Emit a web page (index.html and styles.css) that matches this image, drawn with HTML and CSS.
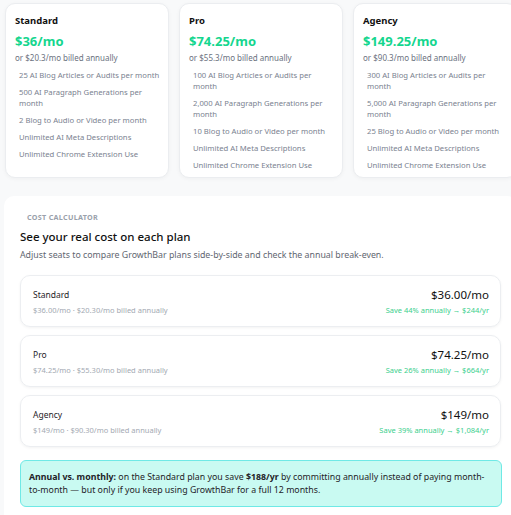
FILE: index.html
```html
<!DOCTYPE html>
<html lang="en">
<head>
    <meta charset="UTF-8">
    <meta name="viewport" content="width=device-width, initial-scale=1.0">
    <title>GrowthBar pricing</title>
    <link rel="stylesheet" href="styles.css">
</head>
<body>
    <div class="page">
        <div class="plans">
            <div class="plan">
                <h3>Standard</h3>
                <div class="price">$36/mo</div>
                <div class="annual">or $20.3/mo billed annually</div>
                <ul>
                    <li>25 AI Blog Articles or Audits per month</li>
                    <li>500 AI Paragraph Generations per month</li>
                    <li>2 Blog to Audio or Video per month</li>
                    <li>Unlimited AI Meta Descriptions</li>
                    <li>Unlimited Chrome Extension Use</li>
                </ul>
            </div>
            <div class="plan">
                <h3>Pro</h3>
                <div class="price">$74.25/mo</div>
                <div class="annual">or $55.3/mo billed annually</div>
                <ul>
                    <li>100 AI Blog Articles or Audits per month</li>
                    <li>2,000 AI Paragraph Generations per month</li>
                    <li>10 Blog to Audio or Video per month</li>
                    <li>Unlimited AI Meta Descriptions</li>
                    <li>Unlimited Chrome Extension Use</li>
                </ul>
            </div>
            <div class="plan">
                <h3>Agency</h3>
                <div class="price">$149.25/mo</div>
                <div class="annual">or $90.3/mo billed annually</div>
                <ul>
                    <li>300 AI Blog Articles or Audits per month</li>
                    <li>5,000 AI Paragraph Generations per month</li>
                    <li>25 Blog to Audio or Video per month</li>
                    <li>Unlimited AI Meta Descriptions</li>
                    <li>Unlimited Chrome Extension Use</li>
                </ul>
            </div>
        </div>

        <div class="calculator">
            <div class="eyebrow">Cost calculator</div>
            <h2>See your real cost on each plan</h2>
            <p class="lead">Adjust seats to compare GrowthBar plans side-by-side and check the annual break-even.</p>

            <div class="rows">
                <div class="row">
                    <div>
                        <div class="row-name">Standard</div>
                        <div class="row-sub">$36.00/mo · $20.30/mo billed annually</div>
                    </div>
                    <div class="row-right">
                        <div class="row-price">$36.00/mo</div>
                        <div class="row-save">Save 44% annually → $244/yr</div>
                    </div>
                </div>
                <div class="row">
                    <div>
                        <div class="row-name">Pro</div>
                        <div class="row-sub">$74.25/mo · $55.30/mo billed annually</div>
                    </div>
                    <div class="row-right">
                        <div class="row-price">$74.25/mo</div>
                        <div class="row-save">Save 26% annually → $664/yr</div>
                    </div>
                </div>
                <div class="row">
                    <div>
                        <div class="row-name">Agency</div>
                        <div class="row-sub">$149/mo · $90.30/mo billed annually</div>
                    </div>
                    <div class="row-right">
                        <div class="row-price">$149/mo</div>
                        <div class="row-save">Save 39% annually → $1,084/yr</div>
                    </div>
                </div>
            </div>

            <div class="note">
                <strong>Annual vs. monthly:</strong> on the Standard plan you save <strong>$188/yr</strong> by committing annually instead of paying month-to-month — but only if you keep using GrowthBar for a full 12 months.
            </div>
        </div>
    </div>
</body>
</html>
```

FILE: styles.css
```css
body {
    margin: 0;
    background: #f8f9fa;
    font-family: "Noto Sans", "Open Sans", sans-serif;
    color: #1f2328;
    overflow: hidden;
}

.page {
    width: 520px;
    padding: 3px 0 0 4px;
}

.plans {
    display: grid;
    grid-template-columns: repeat(3, 164px);
    gap: 10px;
    margin-left: 1px;
}

.plan {
    background: #fff;
    border: 1px solid #ebedf0;
    border-radius: 10px;
    box-shadow: 0 1px 4px rgba(0, 0, 0, 0.04);
    padding: 10px 8px 14px 9px;
    height: 175px;
    box-sizing: border-box;
}

.plan h3 {
    margin: 0;
    font-size: 9.5px;
    font-weight: 700;
    color: #111;
    line-height: 14px;
}

.price {
    margin-top: 4px;
    font-size: 13px;
    font-weight: 700;
    color: #14d68e;
    line-height: 18px;
}

.annual {
    font-size: 8px;
    color: #6b7280;
    line-height: 12px;
    margin-top: 2px;
}

.plan ul {
    list-style: none;
    margin: 6px 0 0;
    padding: 0 0 0 4px;
}

.plan li {
    font-size: 7.7px;
    color: #7a8290;
    line-height: 11px;
    margin-bottom: 6px;
}

.calculator {
    margin-top: 18px;
    background: #fff;
    border-radius: 10px;
    padding: 16px 0 16px 16px;
    width: 497px;
    min-height: 330px;
}

.eyebrow {
    font-size: 7.2px;
    font-weight: 700;
    letter-spacing: 0.3px;
    text-transform: uppercase;
    color: #9aa1ab;
    padding-left: 7px;
    line-height: 10px;
}

.calculator h2 {
    margin: 6px 0 0;
    font-size: 11.5px;
    font-weight: 500;
    color: #111;
    line-height: 17px;
}

.lead {
    margin: 4px 0 0;
    font-size: 8.8px;
    color: #5f6670;
    line-height: 12px;
}

.rows {
    margin-top: 14px;
    width: 481px;
    display: flex;
    flex-direction: column;
    gap: 8px;
}

.row {
    display: flex;
    justify-content: space-between;
    align-items: center;
    height: 52px;
    box-sizing: border-box;
    padding: 0 11px 0 12px;
    border: 1px solid #eceef1;
    border-radius: 10px;
    box-shadow: 0 1px 3px rgba(0, 0, 0, 0.05);
}

.row-name {
    font-size: 8.5px;
    color: #1f2328;
    line-height: 13px;
}

.row-sub {
    margin-top: 4px;
    font-size: 7.5px;
    color: #a3a9b2;
    line-height: 10px;
}

.row-right {
    text-align: right;
}

.row-price {
    font-size: 11.5px;
    color: #111;
    line-height: 16px;
}

.row-save {
    margin-top: 2px;
    font-size: 7.5px;
    color: #3ccf8e;
    line-height: 10px;
}

.note {
    margin-top: 13px;
    width: 482px;
    box-sizing: border-box;
    padding: 10px 8px 9px;
    background: #c9faf2;
    border: 1px solid #6fe9e6;
    border-radius: 6px;
    font-size: 8.8px;
    line-height: 13px;
    color: #1f2328;
}
```
